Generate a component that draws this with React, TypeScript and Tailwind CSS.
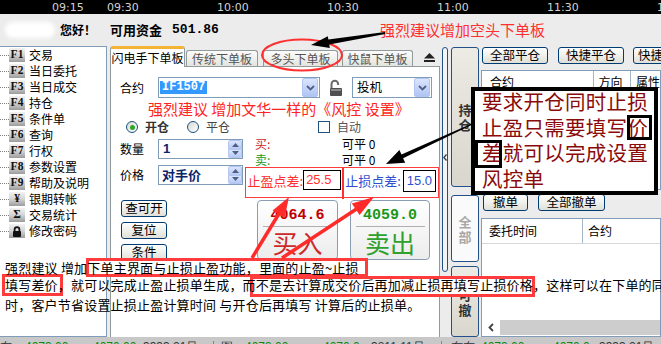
import React from 'react';

const menu = [
  { key: 'F1', label: '交易' },
  { key: 'F2', label: '当日委托' },
  { key: 'F3', label: '当日成交' },
  { key: 'F4', label: '持仓' },
  { key: 'F5', label: '条件单' },
  { key: 'F6', label: '查询' },
  { key: 'F7', label: '行权' },
  { key: 'F8', label: '参数设置' },
  { key: 'F9', label: '帮助及说明' },
  { key: '¥', label: '银期转帐' },
  { key: 'Σ', label: '交易统计' },
  { key: 'lock', label: '修改密码' },
];

const XpButton = ({ children, className = '' }: { children: React.ReactNode; className?: string }) => (
  <div
    className={`flex items-center justify-center shrink-0 rounded-[3px] border border-[#003c74] bg-linear-to-b from-white to-[#e0e0d8] text-[12.5px] leading-none whitespace-nowrap ${className}`}
  >
    {children}
  </div>
);

const Chevron = () => (
  <svg width="9" height="6" viewBox="0 0 9 6">
    <path d="M1 1l3.5 3.5L8 1" stroke="#4d6185" strokeWidth="1.8" fill="none" />
  </svg>
);

const DropBtn = () => (
  <div className="w-[16px] h-[19px] ml-auto mr-px flex items-center justify-center rounded-[2px] border border-[#b4c6f0] bg-linear-to-b from-[#dbe5fd] to-[#b0c4f5]">
    <Chevron />
  </div>
);

const Spin = () => (
  <div className="w-[14px] h-full flex flex-col ml-auto">
    <div className="flex-1 flex items-center justify-center bg-linear-to-b from-[#dbe5fd] to-[#b7c9f5] border border-[#b4c6f0] rounded-t-[2px]">
      <svg width="7" height="4" viewBox="0 0 7 4"><path d="M0 4L3.5 0L7 4Z" fill="#4d6185" /></svg>
    </div>
    <div className="flex-1 flex items-center justify-center bg-linear-to-b from-[#dbe5fd] to-[#b7c9f5] border border-t-0 border-[#b4c6f0] rounded-b-[2px]">
      <svg width="7" height="4" viewBox="0 0 7 4"><path d="M0 0L3.5 4L7 0Z" fill="#4d6185" /></svg>
    </div>
  </div>
);

const Radio = ({ checked }: { checked?: boolean }) => (
  <span className="w-[12px] h-[12px] shrink-0 rounded-full border border-[#1c5180] bg-linear-to-br from-[#d8d8d2] to-white flex items-center justify-center">
    {checked && <span className="w-[5px] h-[5px] rounded-full bg-[#2aa82a]" />}
  </span>
);

const VTab = ({ text, className = '', textClass = '' }: { text: string; className?: string; textClass?: string }) => (
  <div className={`w-[28px] rounded-[3px] border border-[#24508a] flex flex-col items-center justify-center ${className}`}>
    {text.split('').map((c) => (
      <span key={c} className={`text-[13px] leading-[15px] font-bold ${textClass}`}>{c}</span>
    ))}
  </div>
);

export default function App() {
  return (
    <div className="relative w-[661px] h-[344px] overflow-hidden bg-[#ececec] text-black font-['Noto_Sans_CJK_SC',sans-serif] text-[12px]">
      {/* time axis */}
      <div className="h-[14px] bg-black flex items-center pl-[52px] text-[11px] leading-none text-[#d4d4d4] font-['DejaVu_Sans',sans-serif] whitespace-nowrap">
        <span className="w-[55px] shrink-0">09:15</span>
        <span className="w-[110px] shrink-0">09:30</span>
        <span className="w-[110px] shrink-0">10:00</span>
        <span className="w-[110px] shrink-0">10:30</span>
        <span className="w-[110px] shrink-0">11:00</span>
        <span className="w-[110px] shrink-0">11:30</span>
        <span>11:</span>
      </div>

      {/* header */}
      <div className="h-[32px] flex items-center whitespace-nowrap">
        <div className="ml-[5px] w-[50px] h-[16px] rounded-full bg-white blur-[2px] shrink-0" />
        <span className="ml-[5px] text-[12px] font-bold">您好！</span>
        <span className="ml-[14px] text-[13px] font-bold">可用资金</span>
        <span className="ml-[10px] text-[13px] font-bold font-['Liberation_Mono',monospace]">501.86</span>
        <span className="ml-auto mr-[116px] text-[15px] text-[#ff3030]">强烈建议增加空头下单板</span>
      </div>

      {/* main */}
      <div className="flex h-[291px]">
        {/* left menu */}
        <div className="w-[107px] shrink-0 bg-white border-t border-r border-b border-[#7f9db9]">
          {menu.map((m) => (
            <div key={m.label} className="h-[16px] flex items-center">
              <div className="w-[9px] border-t border-dotted border-[#808080]" />
              <div className="w-[16px] h-[14px] flex items-center justify-center bg-linear-to-b from-[#f2f2f2] via-[#d4d4d4] to-[#9c9c9c] text-[11.5px] font-bold leading-none font-['Liberation_Serif',serif] text-[#111]">
                {m.key === 'lock' ? (
                  <svg width="10" height="11" viewBox="0 0 10 11">
                    <path d="M2.6 5.5V3.6a2.4 2.4 0 0 1 4.8 0v1.9" stroke="#111" strokeWidth="1.7" fill="none" />
                    <rect x="1" y="5" width="8" height="6" rx="1" fill="#111" />
                  </svg>
                ) : (
                  m.key
                )}
              </div>
              <span className="ml-[4px] text-[12px] leading-none">{m.label}</span>
            </div>
          ))}
        </div>

        {/* order board */}
        <div className="ml-[3px] w-[330px] shrink-0 flex flex-col">
          <div className="h-[20px] flex items-end text-[12px] leading-none whitespace-nowrap">
            <div className="relative z-10 -mb-px w-[75px] h-[21px] flex items-center justify-center bg-white border-x border-[#919b9c] border-t-[3px] border-t-[#f5b335] rounded-t-[3px]">
              闪电手下单板
            </div>
            <div className="ml-[1px] w-[72px] h-[16px] flex items-center justify-center bg-linear-to-b from-[#fcfcfc] to-[#e4e4de] border border-b-0 border-[#919b9c] rounded-t-[3px] text-[#555]">
              传统下单板
            </div>
            <div className="ml-[5px] w-[75px] h-[16px] flex items-center justify-center bg-linear-to-b from-[#fcfcfc] to-[#e4e4de] border border-b-0 border-[#919b9c] rounded-t-[3px] text-[#555]">
              多头下单板
            </div>
            <div className="ml-[4px] w-[71px] h-[16px] flex items-center justify-center bg-linear-to-b from-[#fcfcfc] to-[#e4e4de] border border-b-0 border-[#919b9c] rounded-t-[3px] text-[#555]">
              快鼠下单板
            </div>
            <div className="ml-[11px] mb-[4px]">
              <svg width="11" height="9" viewBox="0 0 11 9">
                <path d="M0 5.5L5.5 0L11 5.5Z" fill="#222" />
                <rect x="0" y="7" width="11" height="2" fill="#222" />
              </svg>
            </div>
          </div>

          <div className="flex-1 bg-white border border-b-0 border-[#919b9c]">
            {/* contract row */}
            <div className="mt-[10px] h-[21px] flex items-center">
              <span className="w-[47px] pl-[9px] shrink-0">合约</span>
              <div className="w-[162px] h-full shrink-0 border border-[#7f9db9] flex items-center pl-[1px]">
                <span className="bg-[#3399ff] text-white font-bold font-['Liberation_Mono',monospace] text-[12px] leading-[13px] px-[2px]">IF1507</span>
                <DropBtn />
              </div>
              <div className="ml-[8px] w-[16px] shrink-0">
                <svg width="16" height="18" viewBox="0 0 16 18">
                  <path d="M3.5 9V5a3.3 3.3 0 0 1 6.6 0v1" stroke="#6a6a6a" strokeWidth="2" fill="none" />
                  <rect x="2" y="9" width="12" height="8" rx="1" fill="#4e4e4e" />
                  <rect x="3" y="10" width="10" height="2" fill="#8a8a8a" />
                </svg>
              </div>
              <div className="ml-[8px] w-[80px] h-full shrink-0 border border-[#7f9db9] flex items-center pl-[4px]">
                <span className="text-[12.5px]">投机</span>
                <DropBtn />
              </div>
            </div>

            <div className="h-[20px] flex items-center pl-[37px] text-[15px] leading-none text-[#ff2424] whitespace-nowrap">
              强烈建议 增加文华一样的《风控 设置》
            </div>

            {/* open / close */}
            <div className="h-[18px] flex items-center whitespace-nowrap">
              <span className="ml-[15px]"><Radio checked /></span>
              <span className="ml-[7px] font-bold text-[#333]">开仓</span>
              <span className="ml-[18px]"><Radio /></span>
              <span className="ml-[7px] text-[#444]">平仓</span>
              <span className="ml-[88px] w-[12px] h-[12px] border border-[#1c5180] bg-white shrink-0" />
              <span className="ml-[7px] text-[#555]">自动</span>
            </div>

            <div className="flex">
              {/* left column */}
              <div className="w-[132px] shrink-0 pt-[3px]">
                <div className="h-[20px] flex items-center">
                  <span className="w-[47px] pl-[9px] shrink-0">数量</span>
                  <div className="w-[85px] h-full border border-[#7f9db9] flex items-center pl-[4px]">
                    <span className="font-bold text-[13px] text-[#0a246a] font-['Liberation_Sans',sans-serif]">1</span>
                    <Spin />
                  </div>
                </div>
                <div className="mt-[6px] h-[20px] flex items-center">
                  <span className="w-[47px] pl-[9px] shrink-0">价格</span>
                  <div className="w-[85px] h-full border border-[#7f9db9] flex items-center pl-[3px]">
                    <span className="font-bold text-[13px] text-[#0a246a]">对手价</span>
                    <Spin />
                  </div>
                </div>
                <XpButton className="mt-[15px] ml-[10px] w-[46px] h-[17px]">查可开</XpButton>
                <XpButton className="mt-[5px] ml-[10px] w-[46px] h-[17px]">复位</XpButton>
                <XpButton className="mt-[5px] ml-[10px] w-[46px] h-[17px]">条件</XpButton>
              </div>

              {/* right column */}
              <div className="flex-1 pl-[2px]">
                <div className="h-[16px] flex items-center pl-[10px] whitespace-nowrap">
                  <span className="w-[87px] text-[#cc1f1f]">买:</span>
                  <span>可平 0</span>
                </div>
                <div className="h-[16px] flex items-center pl-[10px] whitespace-nowrap">
                  <span className="w-[87px] text-[#1f9a1f]">卖:</span>
                  <span>可平 0</span>
                </div>
                <div className="-mt-[1px] w-[194px] h-[31px] border-[1.5px] border-[#ff3c3c] flex items-start whitespace-nowrap">
                  <span className="ml-[1.5px] mt-[6px] text-[13px] leading-none text-[#ff3030] shrink-0">止盈点差:</span>
                  <div className="mt-[1.5px] w-[38px] h-[20px] shrink-0 border-[1.5px] border-black flex items-center pl-[2px] text-[13px] text-[#ff3030] font-['Liberation_Sans',sans-serif]">25.5</div>
                  <div className="ml-[1px] w-[2px] h-[31px] shrink-0 bg-[#ff3030]" />
                  <span className="ml-[1px] mt-[6px] text-[13px] leading-none text-[#3050d0] shrink-0">止损点差:</span>
                  <div className="ml-[2px] mt-[1.5px] w-[33px] h-[22px] shrink-0 border-[1.5px] border-black flex items-center pl-[3px] text-[13px] text-[#3050d0] font-['Liberation_Sans',sans-serif]">15.0</div>
                </div>
                <div className="mt-[2px] flex">
                  <div className="ml-[12px] w-[81px] h-[60px] rounded-[4px] border border-[#8b9cb5] bg-linear-to-b from-white to-[#ececec] flex flex-col items-center overflow-hidden">
                    <span className="mt-[7px] text-[15px] leading-[15px] font-bold font-['Liberation_Mono',monospace] text-[#c00000]">4064.6</span>
                    <div className="mt-[3px] w-[69px] border-t border-[#b0b0b0]" />
                    <span className="mt-[1px] text-[25px] leading-[28px] text-[#cc2a2a]">买入</span>
                  </div>
                  <div className="ml-[12px] w-[80px] h-[60px] rounded-[4px] border border-[#8b9cb5] bg-linear-to-b from-white to-[#ececec] flex flex-col items-center overflow-hidden">
                    <span className="mt-[7px] text-[15px] leading-[15px] font-bold font-['Liberation_Mono',monospace] text-[#1a961a]">4059.0</span>
                    <div className="mt-[3px] w-[69px] border-t border-[#b0b0b0]" />
                    <span className="mt-[1px] text-[25px] leading-[28px] text-[#2ea02e]">卖出</span>
                  </div>
                </div>
              </div>
            </div>
          </div>
        </div>

        {/* slim collapse bar */}
        <div className="ml-[2px] mt-px w-[6px] h-[225px] shrink-0 rounded-full border border-[#24508a] bg-[#f4f4f4] flex flex-col items-center">
          <svg className="mt-[106px]" width="4" height="7" viewBox="0 0 4 7">
            <path d="M3.5 0.5L0.8 3.5L3.5 6.5" stroke="#333" strokeWidth="1.2" fill="none" />
          </svg>
        </div>

        {/* vertical tabs */}
        <div className="ml-[3px] w-[28px] shrink-0 flex flex-col pt-px">
          <VTab text="持仓" className="h-[140px] bg-linear-to-b from-[#ecebe4] to-[#d9d6cd]" textClass="text-[#333]" />
          <VTab text="全部" className="mt-[8px] h-[67px] bg-[#fafafa]" textClass="text-[#a8a8a8]" />
          <VTab text="可撤" className="mt-[4px] h-[71px] bg-linear-to-b from-[#ecebe4] to-[#d9d6cd]" textClass="text-[#333]" />
        </div>

        {/* positions / orders */}
        <div className="ml-[2px] flex-1 min-w-0 flex flex-col pt-px overflow-hidden">
          <div className="h-[17px] flex">
            <XpButton className="ml-px w-[66px] h-[17px]">全部平仓</XpButton>
            <XpButton className="ml-[10px] w-[66px] h-[17px]">快捷平仓</XpButton>
            <XpButton className="ml-[9px] w-[66px] h-[17px] justify-start pl-[4px]">快捷平仓</XpButton>
          </div>
          <div className="mt-[6px] h-[120px] shrink-0 border border-[#7f9db9] bg-white">
            <div className="h-[22px] flex items-center whitespace-nowrap">
              <span className="w-[120px] h-full flex items-center pl-[8px] border-r border-[#a5b6c8]">合约</span>
              <span className="w-[40px] h-full flex items-center pl-[5px] border-r border-[#a5b6c8]">方向</span>
              <span className="pl-[5px]">属性</span>
            </div>
          </div>
          <div className="mt-[4px] h-[17px] flex">
            <XpButton className="ml-[2px] w-[45px] h-[17px]">撤单</XpButton>
            <XpButton className="ml-[10px] w-[67px] h-[17px]">全部撤单</XpButton>
          </div>
          <div className="mt-[7px] flex-1 border border-[#7f9db9] bg-white flex flex-col">
            <div className="h-[25px] flex items-center whitespace-nowrap border-b border-[#d8d8d8]">
              <span className="w-[101px] h-full flex items-center pl-[7px] border-r border-[#a5b6c8]">委托时间</span>
              <span className="pl-[5px]">合约</span>
            </div>
            <div className="flex-1" />
            <div className="h-[15px] flex mb-px">
              <div className="w-[18px] flex items-center justify-center">
                <svg width="6" height="9" viewBox="0 0 6 9">
                  <path d="M5 1L1.5 4.5L5 8" stroke="#444" strokeWidth="1.8" fill="none" />
                </svg>
              </div>
              <div className="flex-1 bg-[#cdcdcd]" />
            </div>
          </div>
        </div>
      </div>

      {/* status bar */}
      <div className="h-[7px] bg-[#c8c8c8] overflow-hidden flex pt-[4px] text-[12px] leading-[12px] whitespace-nowrap font-['Liberation_Sans',sans-serif]">
        <span className="w-[25px] shrink-0 text-[#333]">东</span>
        <span className="w-[68px] shrink-0 text-[#118811]">4073.00</span>
        <span className="w-[50px] shrink-0 text-[#118811]">4070.00</span>
        <span className="w-[70px] shrink-0 text-[#333]">3333 21只</span>
        <span className="w-[8px] shrink-0 border-l border-[#888]" />
        <span className="w-[24px] shrink-0 text-[#333]">图</span>
        <span className="w-[78px] shrink-0 text-[#118811]">4073.00</span>
        <span className="w-[48px] shrink-0 text-[#118811]">4070.0</span>
        <span className="w-[70px] shrink-0 text-[#333]">3811 11只</span>
        <span className="w-[10px] shrink-0 border-l border-[#888]" />
        <span className="w-[30px] shrink-0 text-[#333]">东东</span>
        <span className="w-[72px] shrink-0 text-[#118811]">4073.00</span>
        <span className="w-[46px] shrink-0 text-[#118811]">4070.0</span>
        <span className="shrink-0 text-[#333]">3333 21只</span>
      </div>

      {/* annotation: red boxes at the bottom text */}
      <div className="absolute left-[86px] top-[258px] w-[282px] h-[19px] border-[3px] border-[#ff3b3b] bg-white" />
      <div className="absolute left-[2px] top-[274px] w-[61px] h-[22px] border-[3px] border-[#ff3b3b] bg-white" />
      <div className="absolute left-[250px] top-[276px] w-[285px] h-[21px] border-[3px] border-[#ff3b3b] bg-white" />

      {/* annotation: bottom text */}
      <div className="absolute left-[5px] top-[259px] text-[13px] tracking-[0.2px] leading-[17px] text-black whitespace-nowrap">
        <div>强烈建议 增加下单主界面与止损止盈功能，里面的止盈~止损</div>
        <div>填写差价，就可以完成止盈止损单生成，而不是去计算成交价后再加减止损再填写止损价格，这样可以在下单的同</div>
        <div className="mt-[3px]">时，客户节省设置止损止盈计算时间 与开仓后再填写 计算后的止损单。</div>
      </div>

      {/* annotation: arrows and ellipse */}
      <svg className="absolute left-0 top-0 pointer-events-none" width="661" height="344" viewBox="0 0 661 344">
        <ellipse cx="302" cy="55" rx="40" ry="15.5" fill="none" stroke="#ff3030" strokeWidth="2" />
        <polygon points="385.2,34 384.8,32 328.4,39.6 327.8,36.2 311,45 329.8,48 329.2,44.6" fill="#000" />
        <line x1="252" y1="258" x2="280" y2="212" stroke="#ff2a2a" strokeWidth="3.5" />
        <polygon points="289,197 284.6,217.8 272.6,210.6" fill="#ff2a2a" />
        <line x1="282" y1="258" x2="358" y2="208" stroke="#ff2a2a" strokeWidth="3.5" />
        <polygon points="374,197 359.6,215 351.8,203.4" fill="#ff2a2a" />
        <polygon points="483.2,118.5 482.8,119.5 403.1,158.2 405.2,162.7 386,164 399.4,150 401.5,154.6" fill="#000" />
      </svg>

      {/* annotation: black callout */}
      <div className="absolute left-[471px] top-[87px] w-[187px] h-[108px] border-[4px] border-black bg-white">
        <div className="relative -mt-[2px] pl-[7px] text-[20.5px] leading-[25.5px] tracking-[0.25px] text-[#8a0b0b] whitespace-nowrap">
          <div>要求开仓同时止损</div>
          <div>止盈只需要填写价</div>
          <div>差就可以完成设置</div>
          <div>风控单</div>
        </div>
        <div className="absolute left-[152px] top-[24px] w-[25px] h-[25px] border-[3px] border-black" />
        <div className="absolute left-0 top-[49px] w-[27px] h-[28px] border-[3px] border-black" />
      </div>
    </div>
  );
}
